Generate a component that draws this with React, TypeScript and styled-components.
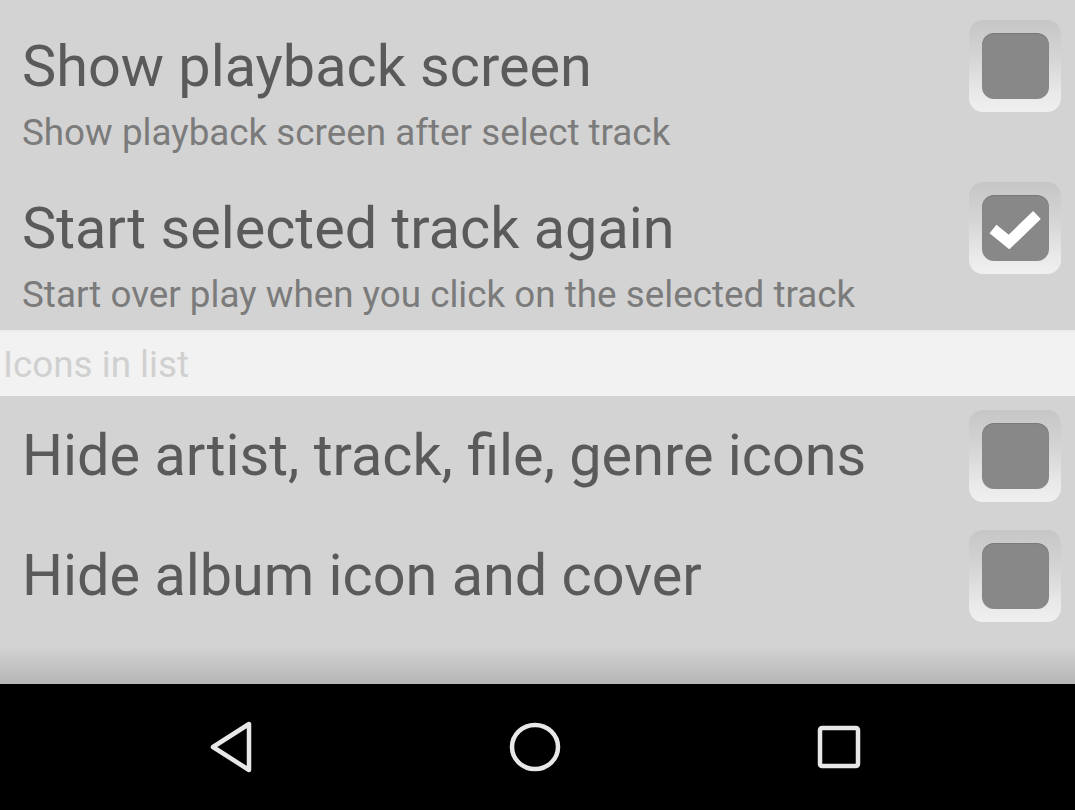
import React from "react";
import styled, { createGlobalStyle } from "styled-components";

const Global = createGlobalStyle`
  html, body { margin: 0; padding: 0; background: #d3d3d3; }
  body { font-family: Roboto, "Noto Sans", sans-serif; overflow: hidden; }
`;

const Screen = styled.div`
  width: 1075px;
  height: 810px;
  display: flex;
  flex-direction: column;
  background: #d3d3d3;
`;

const List = styled.div`
  flex: 1;
  display: flex;
  flex-direction: column;
  padding-top: 6px;
  background: linear-gradient(to bottom, #d3d3d3 0, #d3d3d3 calc(100% - 38px), #b6b6b6 100%);
`;

const Row = styled.div<{ $tall?: boolean }>`
  height: ${(p) => (p.$tall ? 162 : 120)}px;
  display: flex;
  align-items: ${(p) => (p.$tall ? "flex-start" : "center")};
  padding: 0 14px 0 22px;
  box-sizing: border-box;
`;

const TextCol = styled.div<{ $tall?: boolean }>`
  flex: 1;
  display: flex;
  flex-direction: column;
  padding-top: ${(p) => (p.$tall ? 28 : 0)}px;
`;

const Title = styled.div`
  font-size: 57.6px;
  line-height: 66px;
  color: #5a5a5a;
  white-space: nowrap;
`;

const Summary = styled.div`
  font-size: 36.8px;
  line-height: 44px;
  color: #7b7b7b;
  white-space: nowrap;
  margin-top: 11px;
`;

const Box = styled.div<{ $tall?: boolean }>`
  width: 92px;
  height: 92px;
  margin-top: ${(p) => (p.$tall ? 14 : 0)}px;
  border-radius: 14px;
  box-sizing: border-box;
  background: linear-gradient(to bottom, #c6c6c6 0%, #d4d4d4 40%, #e9e9e9 80%, #f0f0f0 100%);
  display: flex;
  align-items: center;
  justify-content: center;
`;

const Inner = styled.div`
  width: 67px;
  height: 66px;
  border-radius: 12px;
  background: #888888;
  box-shadow: inset 0 1px 1px rgba(0, 0, 0, 0.12);
  display: flex;
  align-items: center;
  justify-content: center;
`;

const Category = styled.div`
  height: 66px;
  background: #f2f2f2;
  border-top: 2px solid #ebebeb;
  box-sizing: border-box;
  display: flex;
  align-items: center;
  padding-left: 3px;
  font-size: 36.8px;
  color: #d0d0d0;
`;

const NavBar = styled.div`
  height: 126px;
  background: #000;
  display: flex;
  align-items: center;
  justify-content: center;
  gap: 224px;
  padding-right: 6px;
`;

const NavButton = styled.div`
  display: flex;
  align-items: center;
  justify-content: center;
  width: 80px;
  height: 80px;
`;

const Check = () => (
  <svg width="54" height="42" viewBox="0 0 54 42">
    <path d="M5 22 L21 35 L49 8" fill="none" stroke="#ffffff" strokeWidth="11" strokeLinejoin="miter" />
  </svg>
);

const CheckBox = ({ checked, tall }: { checked?: boolean; tall?: boolean }) => (
  <Box $tall={tall}>
    <Inner>{checked && <Check />}</Inner>
  </Box>
);

export default function App() {
  return (
    <Screen>
      <Global />
      <List>
        <Row $tall>
          <TextCol $tall>
            <Title>Show playback screen</Title>
            <Summary>Show playback screen after select track</Summary>
          </TextCol>
          <CheckBox tall />
        </Row>
        <Row $tall>
          <TextCol $tall>
            <Title>Start selected track again</Title>
            <Summary>Start over play when you click on the selected track</Summary>
          </TextCol>
          <CheckBox tall checked />
        </Row>
        <Category>Icons in list</Category>
        <Row>
          <TextCol>
            <Title>Hide artist, track, file, genre icons</Title>
          </TextCol>
          <CheckBox />
        </Row>
        <Row>
          <TextCol>
            <Title>Hide album icon and cover</Title>
          </TextCol>
          <CheckBox />
        </Row>
      </List>
      <NavBar>
        <NavButton>
          <svg width="56" height="56" viewBox="0 0 56 56">
            <path d="M46 5 L46 51 L10 28 Z" fill="none" stroke="#e8e8e8" strokeWidth="4.5" strokeLinejoin="round" />
          </svg>
        </NavButton>
        <NavButton>
          <svg width="56" height="56" viewBox="0 0 56 56">
            <ellipse cx="28" cy="28" rx="23" ry="22" fill="none" stroke="#e8e8e8" strokeWidth="4.5" />
          </svg>
        </NavButton>
        <NavButton>
          <svg width="56" height="56" viewBox="0 0 56 56">
            <rect x="9" y="9" width="38" height="38" rx="2" fill="none" stroke="#e8e8e8" strokeWidth="4.5" />
          </svg>
        </NavButton>
      </NavBar>
    </Screen>
  );
}
